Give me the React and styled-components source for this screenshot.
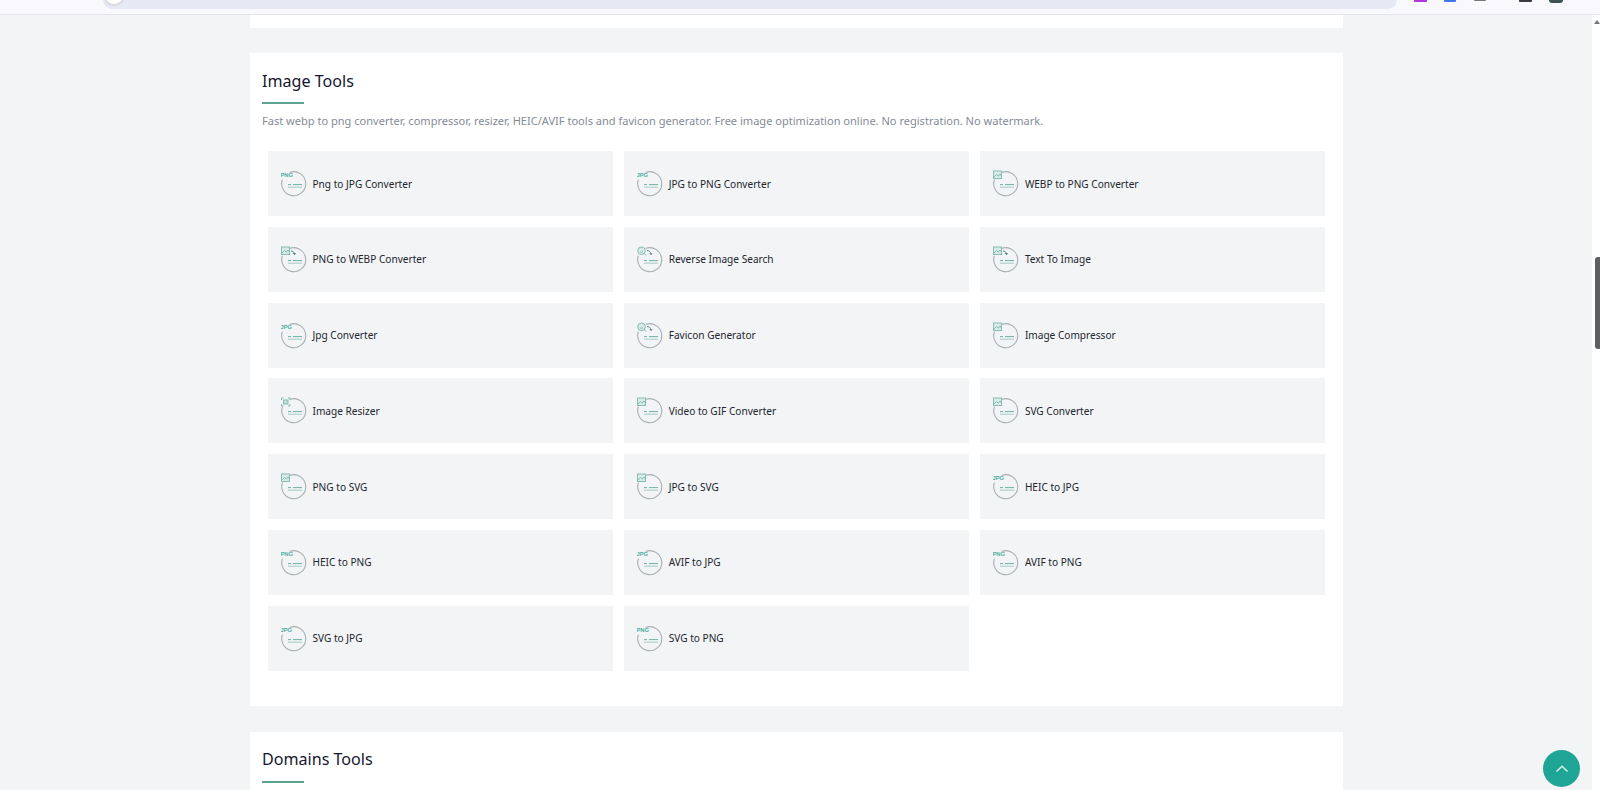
import React from "react";
import styled, { createGlobalStyle } from "styled-components";

const Global = createGlobalStyle`
  html, body { margin: 0; padding: 0; height: 100%; overflow: hidden; background: #f3f4f6; }
  body { font-family: "Noto Sans", "Open Sans", sans-serif; }
  #root { height: 100%; }
`;
const Page = styled.div`
  height: 790px; display: flex; flex-direction: column; overflow: hidden; position: relative;
`;
const Browser = styled.div`
  height: 14px; flex: none; background: #f9f9fd; border-bottom: 1px solid #e4e5ec;
  display: flex; align-items: flex-start; padding: 0 8px 0 103px; gap: 0;
`;
const UrlBar = styled.div`
  width: 1294px; height: 9px; background: #e6e8f3; border-radius: 0 0 14px 14px; position: relative; flex: none;
  overflow: hidden;
`;
const UrlKnob = styled.span`
  position: absolute; left: 0; top: -16px; width: 22px; height: 22px; border-radius: 50%;
  background: #fff; border: 2px solid #dcdce2; box-sizing: border-box;
`;
const Ext = styled.span`
  flex: none; width: ${p => p.$w}px; height: ${p => p.$h}px; margin-left: ${p => p.$m}px;
  background: ${p => p.$c}; border-radius: ${p => p.$r || "0 0 1px 1px"};
`;
const Body = styled.div`flex: 1; display: flex; min-height: 0;`;
const Main = styled.main`
  flex: 1; display: flex; flex-direction: column; align-items: flex-start; padding-left: 250px; gap: 25px;
`;
const Scrollbar = styled.div`
  width: 8px; flex: none; background: #fff; position: relative;
`;
const Thumb = styled.div`
  position: absolute; right: 0; top: 242px; width: 5px; height: 92px; background: #5d5f63; border-radius: 3px 0 0 3px;
`;
const Arrow = styled.div`
  position: absolute; right: 0; top: 5px; width: 0; height: 0;
  border-left: 3px solid transparent; border-right: 3px solid transparent; border-bottom: 4px solid #777;
`;
const Card = styled.section`
  width: 1093px; background: #fff; flex: none; box-sizing: border-box; padding: ${p => p.$pad};
  height: ${p => p.$h}px; margin-top: ${p => p.$mt || 0}px;
`;
const Title = styled.h2`
  margin: 0; font-size: 16.1px; line-height: 24px; font-weight: 400; color: #14162e;
`;
const Rule = styled.div`width: 42px; height: 2px; background: #5ba392; margin-top: ${p => p.$mt || 9}px;`;
const Desc = styled.p`
  margin: 8px 0 0; font-size: 11.05px; line-height: 18px; color: #858b96;
`;
const Grid = styled.div`
  display: grid; grid-template-columns: repeat(3, 345.5px); column-gap: 10.7px; row-gap: 10.8px;
  margin: 21px 0 0 5.5px;
`;
const Tile = styled.a`
  height: 65px; background: #f2f4f6; display: flex; align-items: center; padding-left: 13px; gap: 6px;
  font-size: 10.1px; color: #22252c; text-decoration: none;
`;
const Top = styled.button`
  position: absolute; left: 1543px; top: 750px; width: 37px; height: 37px; border: 0; padding: 0; border-radius: 50%;
  background: #1fa595; display: flex; align-items: center; justify-content: center;
`;

const Thumbnail = () => (
  <>
    <rect x="0.5" y="1" width="8" height="7.5" fill="#d9ebe7" />
    <path d="M1 7l2.5-2.5 1.8 1.6L7 4l1.5 2" />
  </>
);

const Badge = ({ kind }) => {
  if (kind === "PNG" || kind === "JPG")
    return <text x="-0.5" y="6.5" fontFamily="Liberation Sans, sans-serif" fontSize="5.8" fontWeight="700" fill="#4fae9f">{kind}</text>;
  if (kind === "img")
    return (
      <g fill="none" stroke="#86bdb1" strokeWidth="1">
        <Thumbnail />
      </g>
    );
  if (kind === "arrow")
    return (
      <g fill="none" stroke="#86bdb1" strokeWidth="1">
        <Thumbnail />
        <path d="M10 5c2 0 3 1 3.5 3" stroke="#4d8a80" />
        <path d="M12.3 7.2l1.3 1.5 1-1.7" stroke="#4d8a80" />
      </g>
    );
  if (kind === "search")
    return (
      <g fill="none" stroke="#86bdb1" strokeWidth="1">
        <circle cx="4.5" cy="4.8" r="3.8" fill="#d9ebe7" />
        <path d="M7.3 7.6l2 2M3 5.5c1 1 2 1 3 0" />
        <path d="M10 4.5c2 0 3.5 1.2 4 3.5" stroke="#4d8a80" />
        <path d="M12.8 7.2l1.3 1.5 1-1.7" stroke="#4d8a80" />
      </g>
    );
  return (
    <g fill="none" stroke="#86bdb1" strokeWidth="1">
      <path d="M0.5 3V1h2M7 1h2v2M9 7v2H7M2.5 9h-2V7" />
      <rect x="2.5" y="3" width="4.5" height="4" fill="#bfddd6" />
    </g>
  );
};

const ToolIcon = ({ kind }) => (
  <svg width="26" height="27" viewBox="0 0 26 27" fill="none" style={{ flex: "none" }}>
    <path d="M9 2.3A12 12 0 1 1 1.3 10" stroke="#a7afb1" strokeWidth="1.1" strokeLinecap="round" />
    <path d="M12 14.6h9M7 14.6h3" stroke="#6fb2a4" strokeWidth="1" />
    <path d="M7 17.2h14" stroke="#a9cbc3" strokeWidth="1" />
    <Badge kind={kind} />
  </svg>
);

const tools = [
  ["Png to JPG Converter", "PNG"], ["JPG to PNG Converter", "JPG"], ["WEBP to PNG Converter", "img"],
  ["PNG to WEBP Converter", "arrow"], ["Reverse Image Search", "search"], ["Text To Image", "arrow"],
  ["Jpg Converter", "JPG"], ["Favicon Generator", "search"], ["Image Compressor", "img"],
  ["Image Resizer", "resize"], ["Video to GIF Converter", "img"], ["SVG Converter", "img"],
  ["PNG to SVG", "img"], ["JPG to SVG", "img"], ["HEIC to JPG", "JPG"],
  ["HEIC to PNG", "PNG"], ["AVIF to JPG", "JPG"], ["AVIF to PNG", "PNG"],
  ["SVG to JPG", "JPG"], ["SVG to PNG", "PNG"],
];

export default function App() {
  return (
    <Page>
      <Global />
      <Browser>
        <UrlBar><UrlKnob /></UrlBar>
        <Ext $w={13} $h={2} $c="#b431e0" $m={17} />
        <Ext $w={12} $h={2} $c="#3f78ee" $m={17} />
        <Ext $w={12} $h={1} $c="#77777c" $m={18} />
        <Ext $w={13} $h={2} $c="#3a3a42" $m={33} />
        <Ext $w={14} $h={3} $c="#3c5255" $m={17} $r="0 0 7px 7px" />
      </Browser>
      <Body>
        <Main>
          <Card $h={13} />
          <Card $h={653} $pad="16px 12px 0">
            <Title>Image Tools</Title>
            <Rule />
            <Desc>Fast webp to png converter, compressor, resizer, HEIC/AVIF tools and favicon generator. Free image optimization online. No registration. No watermark.</Desc>
            <Grid>
              {tools.map(([label, kind]) => (
                <Tile key={label} href="#"><ToolIcon kind={kind} />{label}</Tile>
              ))}
            </Grid>
          </Card>
          <Card $h={60} $mt={1} $pad="15px 12px 0">
            <Title>Domains Tools</Title>
            <Rule $mt={10} />
          </Card>
        </Main>
        <Scrollbar><Arrow /><Thumb /></Scrollbar>
      </Body>
      <Top aria-label="Back to top">
        <svg width="14" height="14" viewBox="0 0 14 14" fill="none">
          <path d="M1.5 9.5L7 4.2l5.5 5.3" stroke="#d8f1ed" strokeWidth="1.5" />
        </svg>
      </Top>
    </Page>
  );
}
